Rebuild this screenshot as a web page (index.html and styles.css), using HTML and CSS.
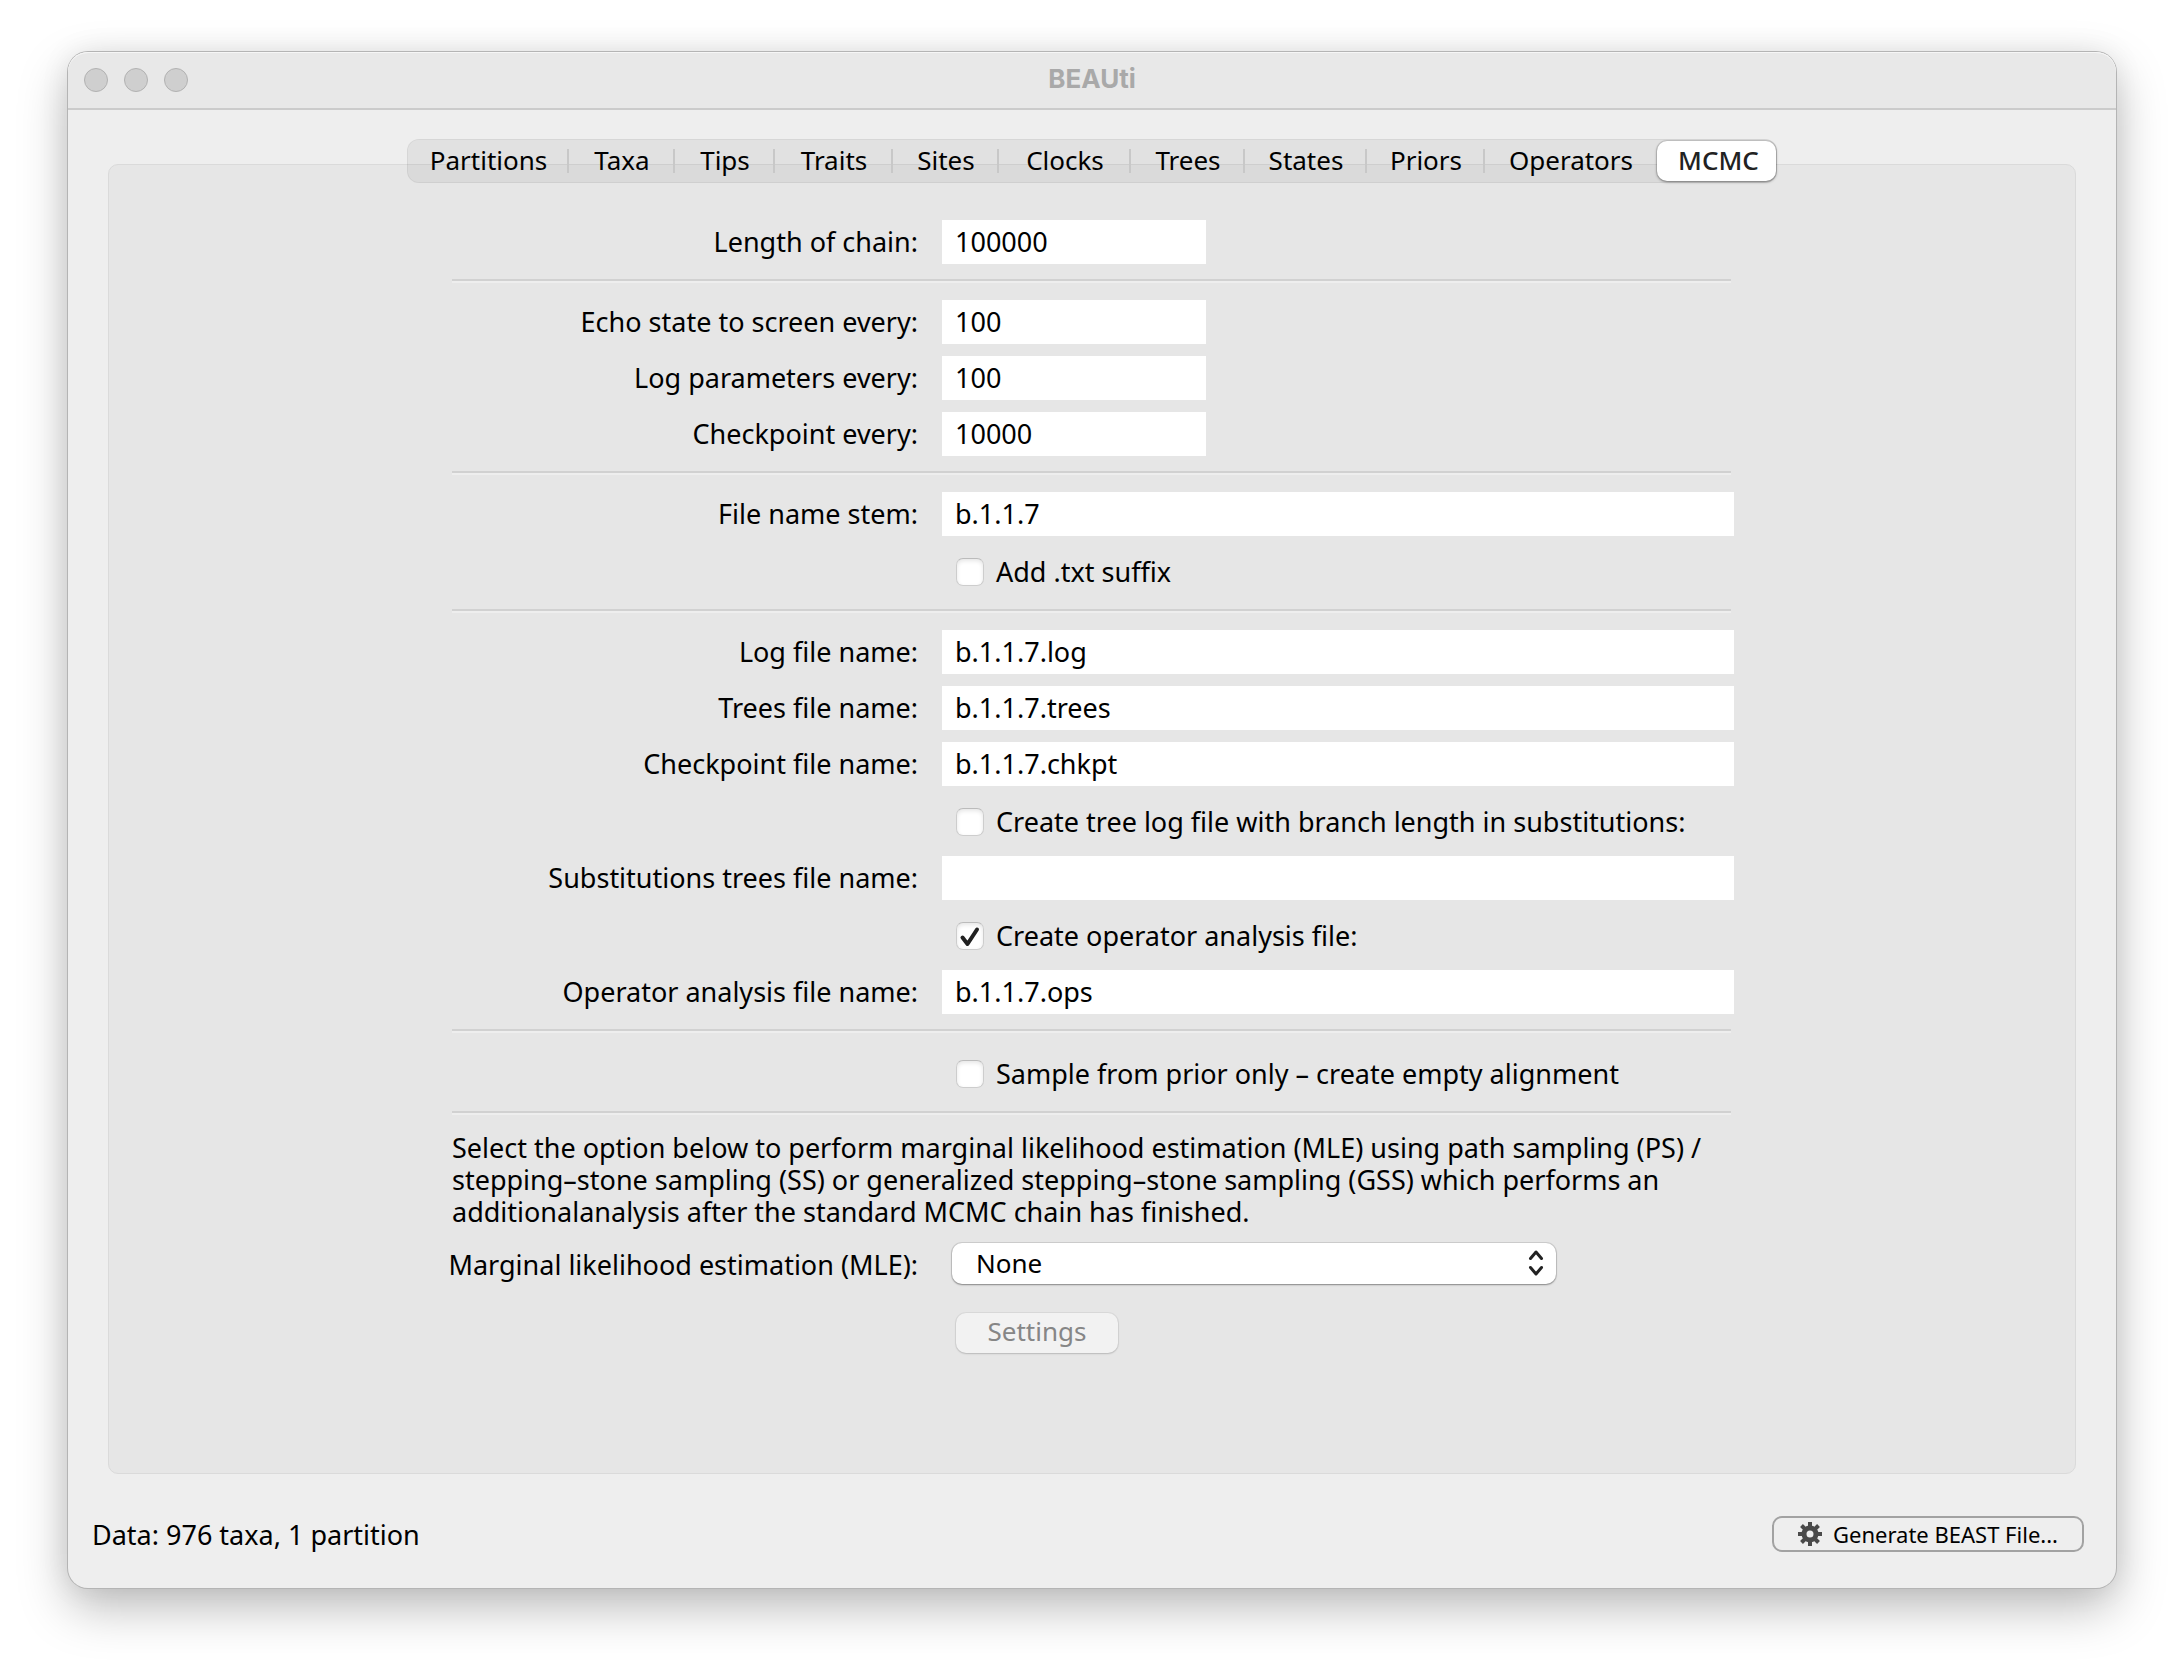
FILE: index.html
```html
<!DOCTYPE html>
<html lang="en">
<head>
<meta charset="utf-8">
<title>BEAUti</title>
<link rel="stylesheet" href="styles.css">
</head>
<body>
<main class="window">
  <header class="titlebar">
    <div class="lights"><span class="light"></span><span class="light"></span><span class="light"></span></div>
    <h1 class="title">BEAUti</h1>
  </header>

  <nav class="tabs" role="tablist">
    <button class="tab" role="tab" type="button">Partitions</button>
    <button class="tab" role="tab" type="button">Taxa</button>
    <button class="tab" role="tab" type="button">Tips</button>
    <button class="tab" role="tab" type="button">Traits</button>
    <button class="tab" role="tab" type="button">Sites</button>
    <button class="tab" role="tab" type="button">Clocks</button>
    <button class="tab" role="tab" type="button">Trees</button>
    <button class="tab" role="tab" type="button">States</button>
    <button class="tab" role="tab" type="button">Priors</button>
    <button class="tab" role="tab" type="button">Operators</button>
    <button class="tab tab-selected" role="tab" type="button" aria-selected="true">MCMC</button>
  </nav>

  <section class="panel">
    <form class="form">
      <label class="label" for="chain">Length of chain:</label>
      <input class="field field-short" id="chain" type="text" value="100000">
      <hr class="rule">

      <label class="label" for="echo">Echo state to screen every:</label>
      <input class="field field-short" id="echo" type="text" value="100">
      <label class="label" for="logevery">Log parameters every:</label>
      <input class="field field-short" id="logevery" type="text" value="100">
      <label class="label" for="checkevery">Checkpoint every:</label>
      <input class="field field-short" id="checkevery" type="text" value="10000">
      <hr class="rule">

      <label class="label" for="stem">File name stem:</label>
      <input class="field" id="stem" type="text" value="b.1.1.7">
      <label class="check"><input class="box" type="checkbox">Add .txt suffix</label>
      <hr class="rule">

      <label class="label" for="logfile">Log file name:</label>
      <input class="field" id="logfile" type="text" value="b.1.1.7.log">
      <label class="label" for="treesfile">Trees file name:</label>
      <input class="field" id="treesfile" type="text" value="b.1.1.7.trees">
      <label class="label" for="checkfile">Checkpoint file name:</label>
      <input class="field" id="checkfile" type="text" value="b.1.1.7.chkpt">
      <label class="check"><input class="box" type="checkbox">Create tree log file with branch length in substitutions:</label>
      <label class="label" for="substfile">Substitutions trees file name:</label>
      <input class="field" id="substfile" type="text" value="">
      <label class="check"><input class="box" type="checkbox" checked>Create operator analysis file:</label>
      <label class="label" for="opsfile">Operator analysis file name:</label>
      <input class="field" id="opsfile" type="text" value="b.1.1.7.ops">
      <hr class="rule">

      <label class="check"><input class="box" type="checkbox">Sample from prior only – create empty alignment</label>
      <hr class="rule">

      <p class="note">Select the option below to perform marginal likelihood estimation (MLE) using path sampling (PS) /<br>stepping–stone sampling (SS) or generalized stepping–stone sampling (GSS) which performs an<br>additionalanalysis after the standard MCMC chain has finished.</p>

      <label class="label label-mle" for="mle">Marginal likelihood estimation (MLE):</label>
      <div class="select-wrap">
        <select class="select" id="mle"><option>None</option></select>
        <svg class="chevrons" viewBox="0 0 16 28" aria-hidden="true"><path d="M2.5 9.5 8 3l5.500 6.500M2.500 18.500 8 25l5.500-6.500"/></svg>
      </div>
      <button class="settings" type="button" disabled>Settings</button>
    </form>
  </section>

  <footer class="footer">
    <span class="status">Data: 976 taxa, 1 partition</span>
    <button class="generate" type="button">
      <svg class="gear" viewBox="0 0 24 24" aria-hidden="true"><circle class="gear-ring" cx="12" cy="12" r="6"/><path class="gear-teeth" d="M12 0v6M12 18v6M0 12h6M18 12h6M3.500 3.500l4.500 4.500M16 16l4.500 4.500M3.500 20.500l4.500-4.500M16 8l4.500-4.500"/></svg>
      Generate BEAST File...
    </button>
  </footer>
</main>
</body>
</html>
```
FILE: styles.css
```css
* { box-sizing: border-box; }

body {
  margin: 0;
  padding: 52px 68px 84px;
  min-height: 100vh;
  display: flex;
  background: #fff;
  color: #000;
  font: 26px/32px "Noto Sans", "Open Sans", sans-serif;
}

button, input, select { font: inherit; color: inherit; margin: 0; }

.window {
  flex: 1;
  display: flex;
  flex-direction: column;
  background: #eee;
  border-radius: 20px;
  box-shadow: 0 0 0 1px #b4b4b4, 0 20px 50px rgba(0, 0, 0, .26), 0 0 30px rgba(0, 0, 0, .08);
}

.titlebar {
  display: grid;
  grid-template-columns: 1fr auto 1fr;
  align-items: center;
  height: 58px;
  padding: 0 16px;
  background: #e8e8e8;
  border-bottom: 2px solid #cbcbcb;
  border-radius: 20px 20px 0 0;
  box-shadow: inset 0 1px #f6f6f6;
}

.lights { display: flex; gap: 16px; }

.light {
  width: 24px;
  height: 24px;
  border-radius: 50%;
  background: #cfcfcf;
  border: 1px solid #b2b2b2;
}

.title {
  margin: 0;
  padding-bottom: 2px;
  font: 700 26px/32px Inter, sans-serif;
  color: #a9a9a9;
}

.tabs {
  position: relative;
  align-self: center;
  display: grid;
  grid-template-columns: 161px 106px 100px 118px 106px 132px 114px 122px 118px 172px 119px;
  height: 44px;
  margin: 29px 0 -19px;
  background: rgba(0, 0, 0, .05);
  border: 1px solid rgba(0, 0, 0, .05);
  border-radius: 12px;
}

.tab {
  display: flex;
  align-items: center;
  justify-content: center;
  padding: 0 0 2px;
  background: linear-gradient(#c8c8c8, #c8c8c8) right center / 2px 24px no-repeat;
  border: 0;
}

.tab:nth-last-child(2) { background: none; }

.tab-selected {
  margin: 1px 0;
  padding-left: 4px;
  background: #fff;
  border-radius: 10px;
  box-shadow: 0 0 0 1px rgba(0, 0, 0, .1), 0 1px 3px rgba(0, 0, 0, .4);
  color: #222;
  font-weight: 500;
}

.panel {
  flex: 1;
  margin: 0 40px;
  padding: 55px 0 111px;
  background: #e6e6e6;
  border: 1px solid #dadada;
  border-radius: 10px;
}

.form {
  display: grid;
  grid-template-columns: minmax(0, 1fr) 792px;
  gap: 12px 24px;
  max-width: 1284px;
  margin: 0 auto;
  padding-left: 2px;
  font-size: 27px;
}

.label {
  align-self: center;
  justify-self: end;
  white-space: nowrap;
}

.label-mle { padding-top: 6px; }

.field {
  width: 100%;
  height: 44px;
  padding: 0 13px 2px;
  background: #fff;
  border: 0;
  border-radius: 0;
}

.field-short { width: 264px; }

.rule {
  grid-column: 1 / -1;
  width: auto;
  height: 4px;
  margin: 3px 3px 5px 0;
  border: 0;
  border-top: 2px solid #d1d1d1;
  border-bottom: 2px solid #eee;
}

.check {
  grid-column: 2;
  justify-self: start;
  display: flex;
  align-items: center;
  gap: 12px;
  height: 46px;
  padding: 2px 0 0 14px;
}

.box {
  appearance: none;
  width: 28px;
  height: 28px;
  background: #fff;
  border: 1px solid #cdcdcd;
  border-top-color: #bbb;
  border-radius: 7px;
  box-shadow: inset 0 2px 4px rgba(0, 0, 0, .1);
}

.box:checked {
  background: #fff url("data:image/svg+xml,%3Csvg xmlns='http://www.w3.org/2000/svg' viewBox='0 0 26 26'%3E%3Cpath d='M5.500 14.500l5 6.500L20 6.500' fill='none' stroke='%23222' stroke-width='4' stroke-linecap='round' stroke-linejoin='round'/%3E%3C/svg%3E") center / 26px 26px no-repeat;
}

.note {
  grid-column: 1 / -1;
  margin: 0;
  white-space: nowrap;
}

.select-wrap {
  position: relative;
  width: 604px;
  height: 44px;
  margin-left: 10px;
  padding-top: 3px;
}

.select {
  appearance: none;
  width: 100%;
  height: 41px;
  padding: 0 24px 2px;
  background: #fff;
  border: 0;
  border-radius: 10px;
  box-shadow: 0 0 0 1px rgba(0, 0, 0, .1), 0 1px 2px rgba(0, 0, 0, .35);
  font-size: 26px;
}

.chevrons {
  position: absolute;
  right: 12px;
  top: 9px;
  width: 16px;
  height: 28px;
  fill: none;
  stroke: #222;
  stroke-width: 3;
  stroke-linecap: round;
  stroke-linejoin: round;
  pointer-events: none;
}

.settings {
  grid-column: 2;
  width: 162px;
  height: 40px;
  margin: 17px 0 0 14px;
  padding: 0 0 4px;
  background: #f2f2f2;
  border: 0;
  border-radius: 10px;
  box-shadow: 0 0 0 1px rgba(0, 0, 0, .05), 0 1px 2px rgba(0, 0, 0, .15);
  color: #868686;
  font-size: 26px;
}

.footer {
  display: flex;
  align-items: center;
  justify-content: space-between;
  height: 114px;
  padding: 8px 32px 0 24px;
}

.status { font-size: 27px; }

.generate {
  display: flex;
  align-items: center;
  justify-content: center;
  gap: 11px;
  width: 312px;
  height: 36px;
  margin-bottom: 2px;
  padding: 0;
  background: transparent;
  border: 2px solid #a2a2a2;
  border-radius: 10px;
  font-size: 22px;
}

.gear { width: 24px; height: 24px; fill: none; stroke: #4a4a4a; }
.gear-ring { stroke-width: 5; }
.gear-teeth { stroke-width: 4; }
```
